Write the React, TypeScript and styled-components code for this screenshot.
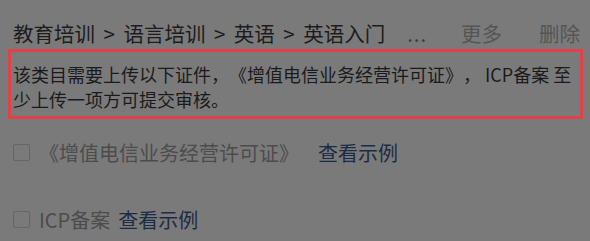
import React from "react";
import styled, { createGlobalStyle } from "styled-components";

const Global = createGlobalStyle`
  html, body { margin: 0; padding: 0; background: #7a7a7a; }
  body {
    font-family: "Noto Sans CJK SC", "Noto Sans", sans-serif;
    text-spacing-trim: space-all;
  }
`;

const Page = styled.div`
  width: 590px;
  height: 241px;
  overflow: hidden;
  background: #7a7a7a;
  text-spacing-trim: space-all;
`;

const Header = styled.div`
  display: flex;
  align-items: center;
  height: 28px;
  padding: 19px 10px 0 13px;
  font-size: 20.5px;
  line-height: 28px;
  color: #1c1c1c;
  white-space: nowrap;
`;

const Crumb = styled.span`
  color: #1c1c1c;
`;

const Sep = styled.span`
  margin: 0 8.5px;
  color: #1c1c1c;
`;

const Ellipsis = styled.span`
  margin-left: 22px;
  color: #3a3a3a;
  letter-spacing: 1px;
`;

const Action = styled.span<{ $first?: boolean }>`
  margin-left: ${(p) => (p.$first ? "auto" : "37px")};
  color: #555;
`;

const Notice = styled.div`
  margin: 2px 7px 0 8px;
  border: 3px solid #e2414a;
  padding: 10px 0 4px 2px;
  font-size: 18px;
  line-height: 25px;
  color: #1a1a1a;
`;

const Row = styled.label`
  display: flex;
  align-items: center;
  height: 67px;
  padding-left: 13px;
  font-size: 20px;
  color: #4c4c4c;
`;

const Box = styled.span`
  width: 15px;
  height: 15px;
  border: 1px solid #656565;
  border-radius: 2px;
  flex: none;
  margin-right: 9px;
`;

const Link = styled.span<{ $gap: number }>`
  color: #1d2c45;
  margin-left: ${(p) => p.$gap}px;
`;

const crumbs = ["教育培训", "语言培训", "英语", "英语入门"];

export default function App() {
  return (
    <Page>
      <Global />
      <Header>
        {crumbs.map((c, i) => (
          <React.Fragment key={c}>
            {i > 0 && <Sep>&gt;</Sep>}
            <Crumb>{c}</Crumb>
          </React.Fragment>
        ))}
        <Ellipsis>...</Ellipsis>
        <Action $first>更多</Action>
        <Action>删除</Action>
      </Header>
      <Notice>
        该类目需要上传以下证件，《增值电信业务经营许可证》， ICP备案 至少上传一项方可提交审核。
      </Notice>
      <Row>
        <Box />
        《增值电信业务经营许可证》
        <Link $gap={19}>查看示例</Link>
      </Row>
      <Row>
        <Box />
        ICP备案
        <Link $gap={8}>查看示例</Link>
      </Row>
    </Page>
  );
}
